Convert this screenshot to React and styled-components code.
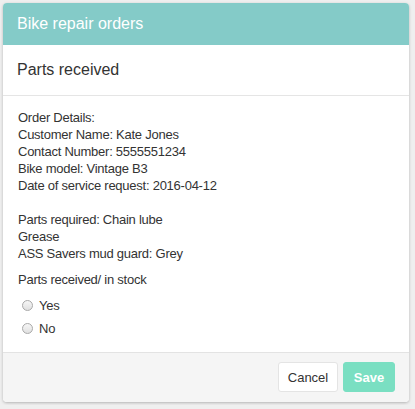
import styled, { createGlobalStyle } from 'styled-components';

const GlobalStyle = createGlobalStyle`
  html, body {
    margin: 0;
    padding: 0;
    background: #efefef;
  }
  body {
    font-family: "Liberation Sans", Arial, sans-serif;
    color: #333;
  }
`;

const Page = styled.div`
  padding: 3px;
  width: 412px;
  box-sizing: border-box;
`;

const Panel = styled.div`
  background: #fff;
  border-radius: 4px;
  overflow: hidden;
  box-shadow: 0 1px 3px rgba(0, 0, 0, 0.25);
`;

const Header = styled.div`
  background: #84cbc8;
  color: #fff;
  height: 42px;
  display: flex;
  align-items: center;
  padding: 0 14px;
  font-size: 16px;
`;

const SubHeader = styled.div`
  height: 50px;
  display: flex;
  align-items: center;
  padding: 0 14px;
  font-size: 16px;
  border-bottom: 1px solid #e5e5e5;
`;

const Body = styled.div`
  padding: 13px 15px 12px;
  font-size: 13px;
  letter-spacing: -0.25px;
  line-height: 17px;
`;

const Block = styled.div`
  margin-bottom: ${(p) => p.gap || 17}px;
`;

const Label = styled.div`
  margin-bottom: 6px;
`;

const Option = styled.label`
  display: flex;
  align-items: center;
  gap: 6px;
  padding-left: 4px;
  height: 23px;
`;

const Radio = styled.span`
  width: 11px;
  height: 11px;
  border-radius: 50%;
  border: 1px solid #a9a9a9;
  background: linear-gradient(#f6f6f6, #e0e0e0);
  box-sizing: border-box;
`;

const Footer = styled.div`
  background: #f5f5f5;
  border-top: 1px solid #e3e3e3;
  display: flex;
  justify-content: flex-end;
  gap: 5px;
  padding: 9px 14px 10px;
`;

const Button = styled.button`
  font-family: "Liberation Sans", Arial, sans-serif;
  font-size: 13px;
  height: 30px;
  width: ${(p) => (p.primary ? '52px' : '60px')};
  padding: 0;
  border-radius: 3px;
  border: 1px solid ${(p) => (p.primary ? '#7adfc2' : '#e4e4e4')};
  background: ${(p) => (p.primary ? '#7adfc2' : '#fff')};
  color: ${(p) => (p.primary ? '#fff' : '#333')};
  font-weight: ${(p) => (p.primary ? 'bold' : 'normal')};
`;

export default function App() {
  return (
    <Page>
      <GlobalStyle />
      <Panel>
        <Header>Bike repair orders</Header>
        <SubHeader>Parts received</SubHeader>
        <Body>
          <Block>
            <div>Order Details:</div>
            <div>Customer Name: Kate Jones</div>
            <div>Contact Number: 5555551234</div>
            <div>Bike model: Vintage B3</div>
            <div>Date of service request: 2016-04-12</div>
          </Block>
          <Block gap={9}>
            <div>Parts required: Chain lube</div>
            <div>Grease</div>
            <div>ASS Savers mud guard: Grey</div>
          </Block>
          <Label>Parts received/ in stock</Label>
          <Option><Radio />Yes</Option>
          <Option><Radio />No</Option>
        </Body>
        <Footer>
          <Button>Cancel</Button>
          <Button primary>Save</Button>
        </Footer>
      </Panel>
    </Page>
  );
}
